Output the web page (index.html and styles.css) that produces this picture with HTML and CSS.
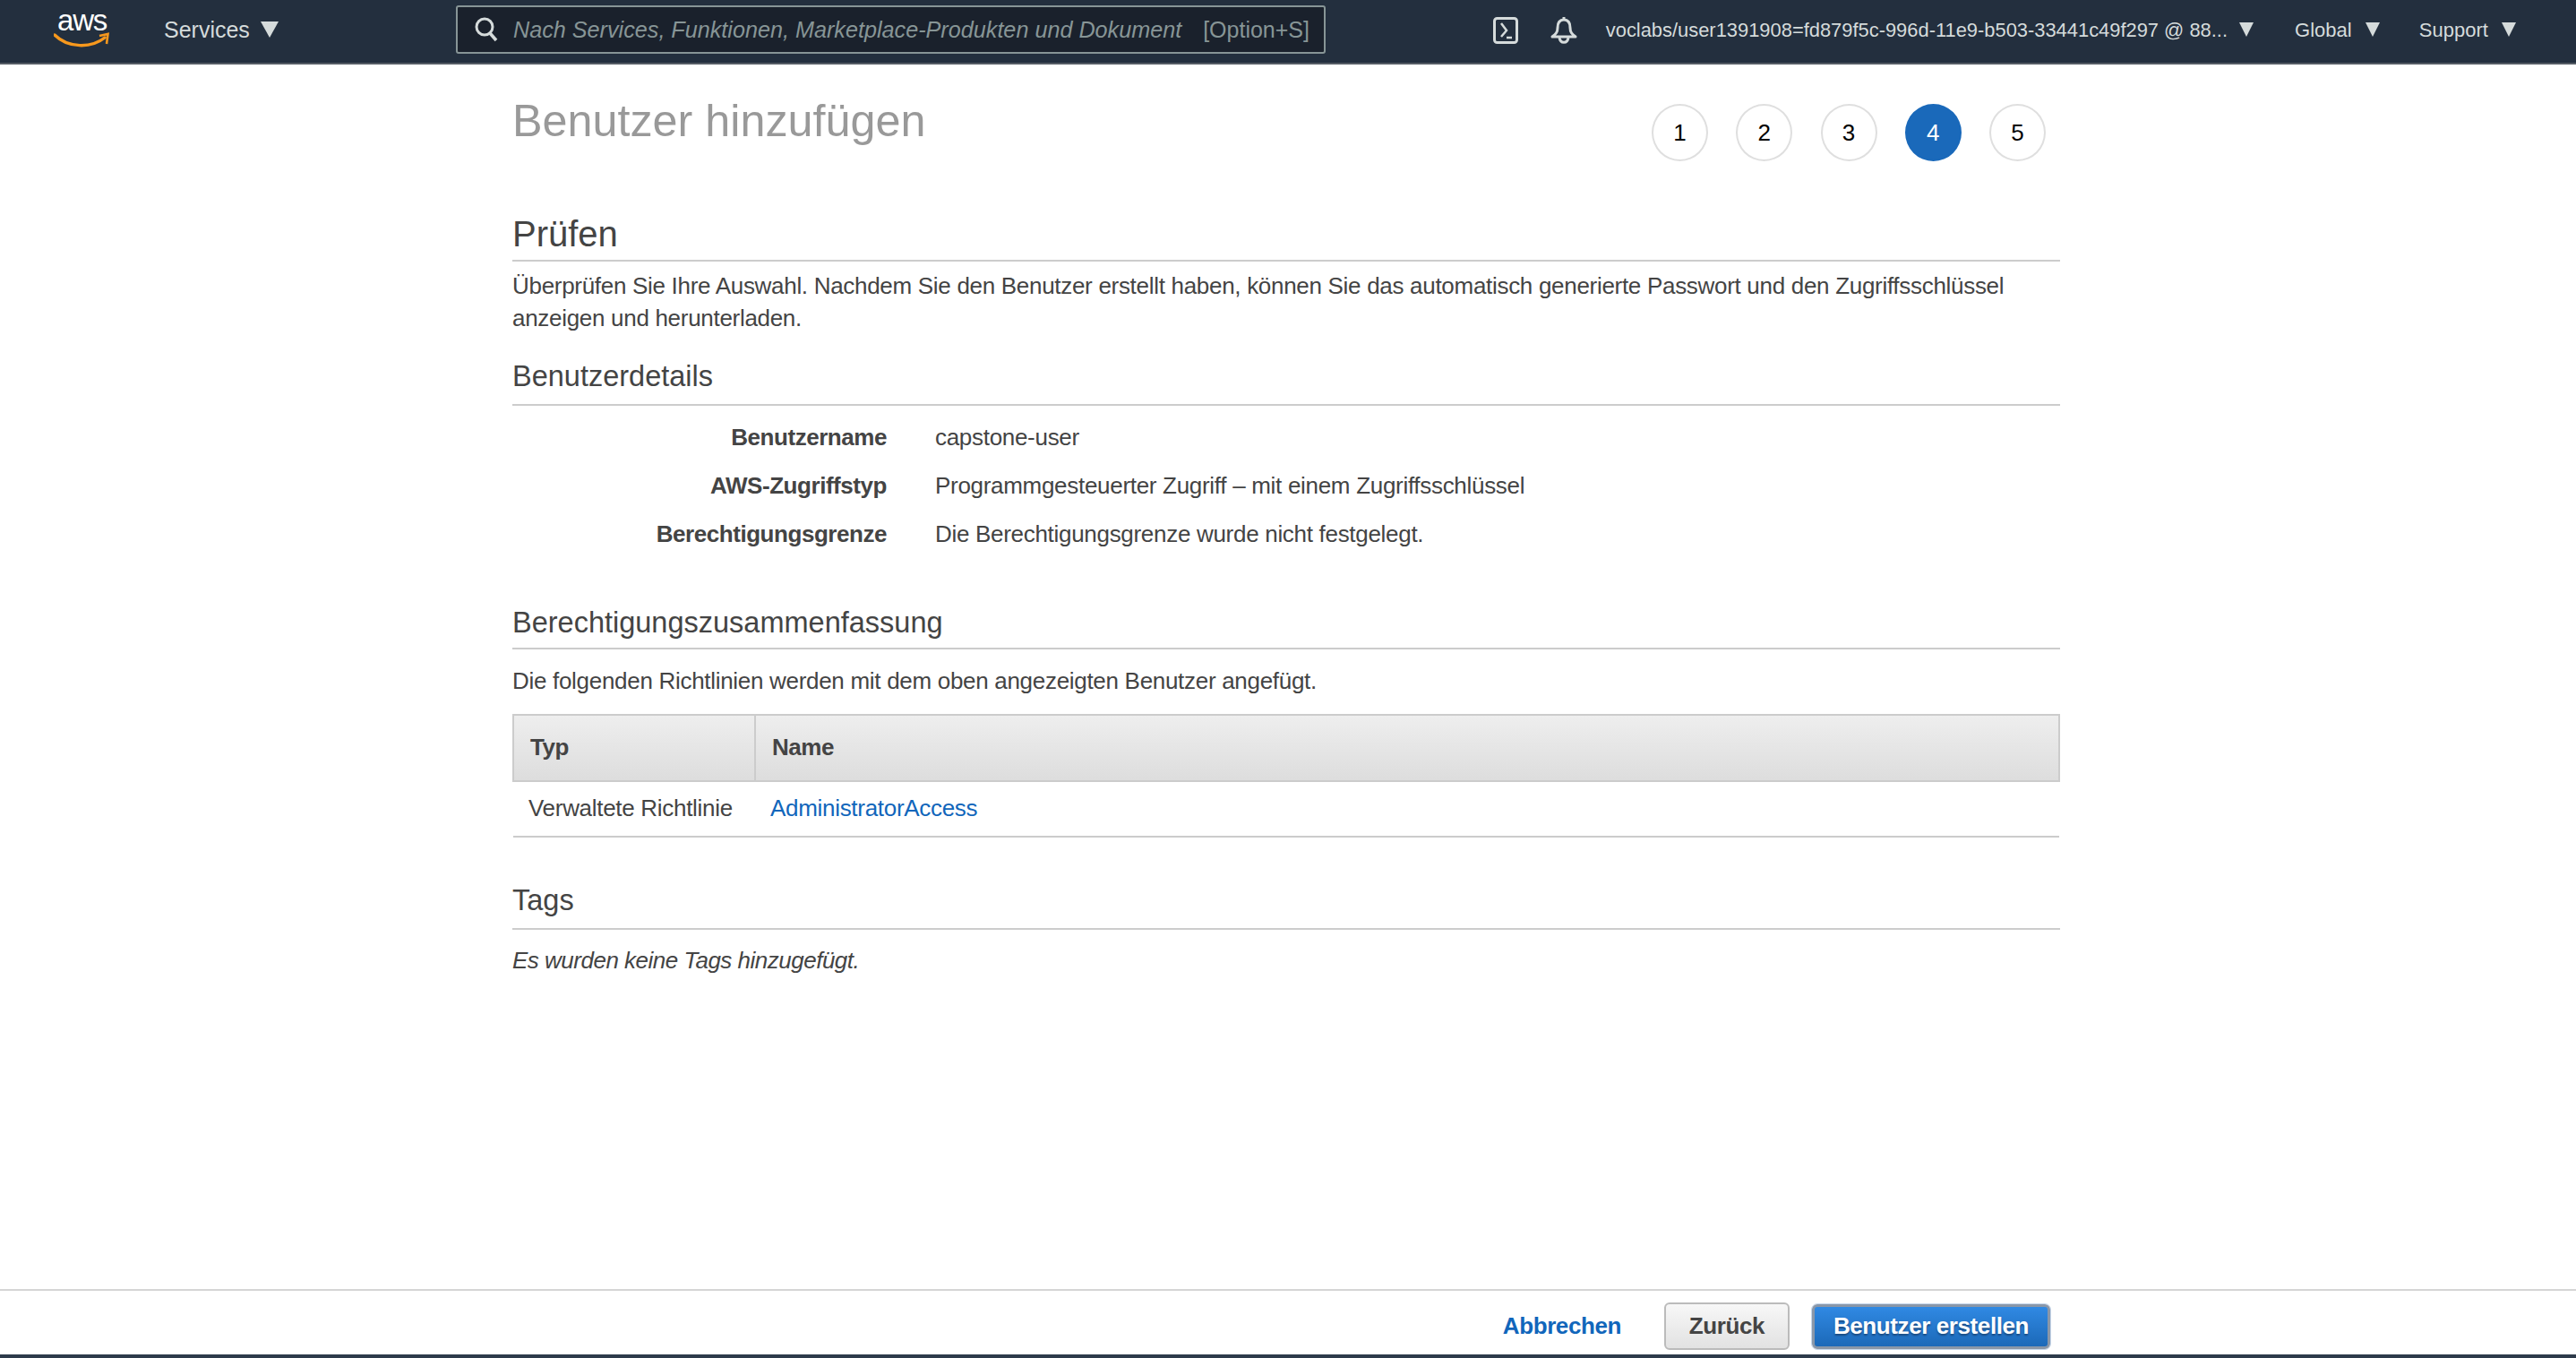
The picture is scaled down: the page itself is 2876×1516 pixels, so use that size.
FILE: index.html
```html
<!DOCTYPE html>
<html lang="de">
<head>
  <meta charset="UTF-8">
  <title>Benutzer hinzufügen</title>
  <link rel="stylesheet" href="styles.css">
</head>
<body>
  <nav class="navbar">
    <a class="logo" href="#">
      <span class="logo-text">aws</span>
      <svg width="66" height="20" viewBox="0 0 66 20">
        <path d="M1 4 C16 19 42 19 57 7" fill="none" stroke="#f7981d" stroke-width="3.5" stroke-linecap="round"/>
        <path d="M51 5 L60.5 3 L59 14" fill="none" stroke="#f7981d" stroke-width="2.6"/>
      </svg>
    </a>
    <a class="nav-item services" href="#">Services <span class="caret caret-big"></span></a>
    <div class="search">
      <svg width="28" height="30" viewBox="0 0 28 30">
        <circle cx="12" cy="12" r="9" fill="none" stroke="#d5dbdb" stroke-width="3"/>
        <path d="M18 19 L25 27" stroke="#d5dbdb" stroke-width="3.5"/>
      </svg>
      <span class="search-text">Nach Services, Funktionen, Marketplace-Produkten und Dokument</span>
      <span class="search-key">[Option+S]</span>
    </div>
    <div class="nav-right">
      <svg class="icon-shell" width="28" height="30" viewBox="0 0 28 30">
        <rect x="1.5" y="1.5" width="25" height="27" rx="3" fill="none" stroke="#d5dbdb" stroke-width="3"/>
        <path d="M9 7 L15 15 L9 22" fill="none" stroke="#d5dbdb" stroke-width="2.5"/>
        <path d="M15 23 H21" stroke="#d5dbdb" stroke-width="2.5"/>
      </svg>
      <svg class="icon-bell" width="32" height="30" viewBox="0 0 32 30">
        <path d="M16 3 C10 3 9 8 9 12 C9 17 7 19 3 22 H29 C25 19 23 17 23 12 C23 8 22 3 16 3 Z" fill="none" stroke="#d5dbdb" stroke-width="3" stroke-linejoin="round"/>
        <path d="M16 0 V4" stroke="#d5dbdb" stroke-width="3"/>
        <path d="M11 23 C12 30 20 30 21 23" fill="none" stroke="#d5dbdb" stroke-width="3"/>
      </svg>
      <a class="nav-item user" href="#">voclabs/user1391908=fd879f5c-996d-11e9-b503-33441c49f297 @ 88... <span class="caret"></span></a>
      <a class="nav-item region" href="#">Global <span class="caret"></span></a>
      <a class="nav-item support" href="#">Support <span class="caret"></span></a>
    </div>
  </nav>

  <main class="wizard">
    <header class="wizard-head">
      <h1>Benutzer hinzufügen</h1>
      <ol class="steps">
        <li>1</li>
        <li>2</li>
        <li>3</li>
        <li class="active">4</li>
        <li>5</li>
      </ol>
    </header>

    <h2 class="title-main">Prüfen</h2>
    <p class="intro">Überprüfen Sie Ihre Auswahl. Nachdem Sie den Benutzer erstellt haben, können Sie das automatisch generierte Passwort und den Zugriffsschlüssel anzeigen und herunterladen.</p>

    <h3 class="title-sub">Benutzerdetails</h3>
    <dl class="details">
      <dt>Benutzername</dt><dd>capstone-user</dd>
      <dt>AWS-Zugriffstyp</dt><dd>Programmgesteuerter Zugriff – mit einem Zugriffsschlüssel</dd>
      <dt>Berechtigungsgrenze</dt><dd>Die Berechtigungsgrenze wurde nicht festgelegt.</dd>
    </dl>

    <h3 class="title-sub perms">Berechtigungszusammenfassung</h3>
    <p class="perms-text">Die folgenden Richtlinien werden mit dem oben angezeigten Benutzer angefügt.</p>
    <table class="policies">
      <thead>
        <tr><th class="col-type">Typ</th><th>Name</th></tr>
      </thead>
      <tbody>
        <tr><td>Verwaltete Richtlinie</td><td><a href="#">AdministratorAccess</a></td></tr>
      </tbody>
    </table>

    <h3 class="title-sub tags">Tags</h3>
    <p class="no-tags">Es wurden keine Tags hinzugefügt.</p>
  </main>

  <footer class="actions">
    <a class="cancel" href="#">Abbrechen</a>
    <button class="btn">Zurück</button>
    <span class="focus-ring"><button class="btn btn-primary">Benutzer erstellen</button></span>
  </footer>
  <div class="bottom-bar"></div>
</body>
</html>
```

FILE: styles.css
```css
* {
  box-sizing: border-box;
  margin: 0;
  padding: 0;
}

html, body {
  height: 100%;
}

body {
  display: flex;
  flex-direction: column;
  height: 1516px;
  overflow: hidden;
  background: #fff;
  color: #444;
  font-family: "Liberation Sans", Arial, sans-serif;
  font-size: 26px;
  letter-spacing: -0.3px;
}

a {
  text-decoration: none;
}

/* top bar */
.navbar {
  display: flex;
  align-items: center;
  flex: none;
  height: 72px;
  padding: 0 67px 4px 60px;
  background: #232f3e;
  border-bottom: 2px solid #545b64;
  letter-spacing: 0;
}

.logo {
  display: flex;
  flex-direction: column;
  width: 123px;
}

.logo-text {
  padding-left: 4px;
  color: #fff;
  font-size: 33px;
  letter-spacing: -1.2px;
  line-height: 24px;
}

.nav-item {
  color: #d5dbdb;
  white-space: nowrap;
}

.services {
  width: 326px;
  font-size: 25px;
}

.caret {
  display: inline-block;
  width: 0;
  height: 0;
  margin-left: 9px;
  vertical-align: 0;
  border-left: 8.5px solid transparent;
  border-right: 8.5px solid transparent;
  border-top: 16px solid #d5dbdb;
}

.user .caret {
  margin-left: 7px;
}

.caret-big {
  margin-left: 5px;
  border-left-width: 10px;
  border-right-width: 10px;
  border-top-width: 18px;
}

.search {
  display: flex;
  align-items: center;
  width: 971px;
  height: 54px;
  padding: 0 16px 0 18px;
  background: #1a212c;
  border: 2px solid #879596;
  border-radius: 3px;
  color: #879596;
}

.search-text {
  margin-left: 16px;
  font-size: 25.2px;
  font-style: italic;
  white-space: nowrap;
}

.search-key {
  margin-left: auto;
  font-size: 25px;
  white-space: nowrap;
}

.nav-right {
  display: flex;
  align-items: center;
  margin-top: 2px;
  margin-left: auto;
  font-size: 22px;
}

.icon-bell {
  margin-left: 35px;
}

.user {
  margin-left: 31px;
  font-size: 21.9px;
}

.region {
  margin-left: 46px;
}

.support {
  margin-left: 44px;
}

/* wizard body */
.wizard {
  flex: 1;
  width: 1728px;
  margin-left: 572px;
}

.wizard-head {
  display: flex;
  justify-content: space-between;
  height: 160px;
}

h1 {
  padding-top: 33px;
  color: #999;
  font-size: 50.3px;
  font-weight: 400;
  letter-spacing: 0;
  line-height: 60px;
}

.steps {
  display: flex;
  gap: 31.25px;
  margin: 44px 16px 0 0;
  list-style: none;
  letter-spacing: 0;
}

.steps li {
  display: flex;
  align-items: center;
  justify-content: center;
  width: 63px;
  height: 64px;
  border: 2px solid #dfdfdf;
  border-radius: 50%;
  color: #000;
  font-size: 26px;
}

.steps .active {
  background: #1a69ba;
  border-color: #1a69ba;
  color: #fff;
}

.title-main {
  height: 60px;
  border-bottom: 2px solid #ccc;
  color: #444;
  font-size: 40px;
  font-weight: 400;
  letter-spacing: 0;
  line-height: 58px;
}

.intro {
  margin-top: 9px;
  line-height: 36px;
}

.title-sub {
  height: 53px;
  border-bottom: 2px solid #ccc;
  color: #444;
  font-size: 32.5px;
  font-weight: 400;
  letter-spacing: 0;
  line-height: 41px;
}

.intro + .title-sub {
  margin-top: 27px;
}

.details {
  display: grid;
  grid-template-columns: 418px 1fr;
  column-gap: 54px;
  row-gap: 18px;
  margin-top: 17px;
  line-height: 36px;
}

.details dt {
  font-weight: 700;
  letter-spacing: -0.45px;
  text-align: right;
}

.perms {
  margin-top: 58px;
  line-height: 46px;
}

.perms-text {
  margin-top: 17px;
  line-height: 36px;
}

.policies {
  width: 100%;
  margin-top: 19px;
  border-collapse: collapse;
  border-bottom: 2px solid #ccc;
}

.policies th {
  height: 74px;
  padding: 0 18px 2px;
  background: linear-gradient(#eee, #ddd);
  border: 2px solid #ccc;
  font-weight: 700;
  letter-spacing: -0.45px;
  text-align: left;
}

.col-type {
  width: 270px;
}

.policies td {
  height: 62px;
  padding: 0 17px 2px;
}

.policies a,
.cancel {
  color: #1166bb;
}

.tags {
  margin-top: 50px;
}

.no-tags {
  margin-top: 16px;
  font-style: italic;
  letter-spacing: -0.5px;
  line-height: 36px;
}

/* bottom actions */
.actions {
  display: flex;
  align-items: center;
  flex: none;
  justify-content: flex-end;
  height: 73px;
  padding: 8px 586px 0 0;
  border-top: 2px solid #d5d5d5;
  letter-spacing: -0.4px;
}

.cancel {
  margin-right: 48px;
  font-weight: 700;
}

.btn {
  width: 140px;
  height: 53px;
  background: linear-gradient(#f7f7f7, #e2e2e2);
  border: 2px solid #bbb;
  border-radius: 6px;
  color: #444;
  font-family: inherit;
  font-size: 26px;
  font-weight: 700;
  letter-spacing: inherit;
}

.focus-ring {
  display: flex;
  margin-left: 24px;
  border: 1px solid #c5d6ea;
  border-radius: 7px;
}

.btn-primary {
  width: 266px;
  height: 50px;
  background: linear-gradient(#3089e3, #1c69b8);
  border: 3px solid #8a97a8;
  color: #fff;
  text-shadow: 0 2px 2px #1a4a80;
}

.bottom-bar {
  flex: none;
  height: 4px;
  background: #2e3b4b;
}
```
